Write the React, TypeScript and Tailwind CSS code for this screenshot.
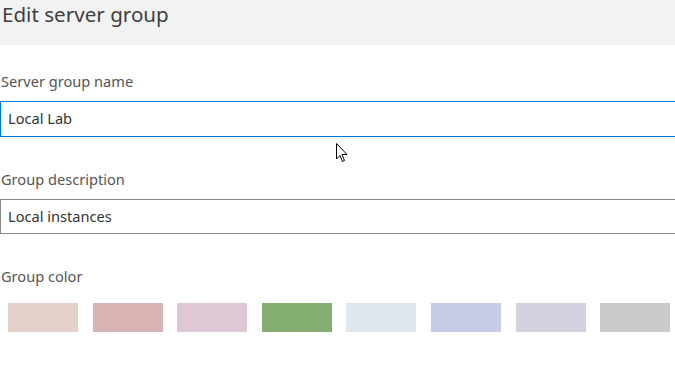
import React from "react";

const swatches = [
  "#e3d0c9",
  "#d9b3b3",
  "#dfc8d5",
  "#85ae72",
  "#dfe6ee",
  "#c7cbe5",
  "#d3d0df",
  "#cacac8",
];

export default function App() {
  return (
    <div
      className="relative w-[675px] h-[373px] overflow-hidden bg-white"
      style={{ fontFamily: '"Noto Sans", "Open Sans", sans-serif' }}
    >
      <div className="h-[45px] bg-[#f2f2f2] pl-[2px]">
        <h1 className="text-[20.6px] leading-[28px] text-[#3f3f3f]">Edit server group</h1>
      </div>
      <div className="pt-[26px]">
        <div className="pl-[1px] text-[14.6px] leading-[20px] text-[#555555]">Server group name</div>
        <div className="mt-[10px] h-[36px] w-[700px] border border-[#0078d7] pl-[7px] flex items-center text-[14.6px] text-[#333333]">
          Local Lab
        </div>
        <div className="mt-[32px] pl-[1px] text-[14.6px] leading-[20px] text-[#555555]">Group description</div>
        <div className="mt-[10px] h-[35px] w-[700px] border border-[#8a8a8a] pl-[7px] flex items-center text-[14.6px] text-[#333333]">
          Local instances
        </div>
        <div className="mt-[32px] pl-[1px] text-[14.6px] leading-[20px] text-[#555555]">Group color</div>
        <div className="mt-[17px] pl-[8px] flex gap-[14.6px]">
          {swatches.map((c) => (
            <div key={c} className="h-[29px] w-[70px] shrink-0" style={{ backgroundColor: c }} />
          ))}
        </div>
      </div>
      <svg
        className="absolute left-[336px] top-[143px]"
        width="12"
        height="20"
        viewBox="0 0 12 20"
      >
        <path
          d="M0.5 0.5 L0.5 16 L4 12.5 L6.5 18.5 L8.5 17.5 L6 11.5 L11 11.5 Z"
          fill="white"
          stroke="black"
          strokeWidth="1"
          strokeLinejoin="miter"
        />
      </svg>
    </div>
  );
}
